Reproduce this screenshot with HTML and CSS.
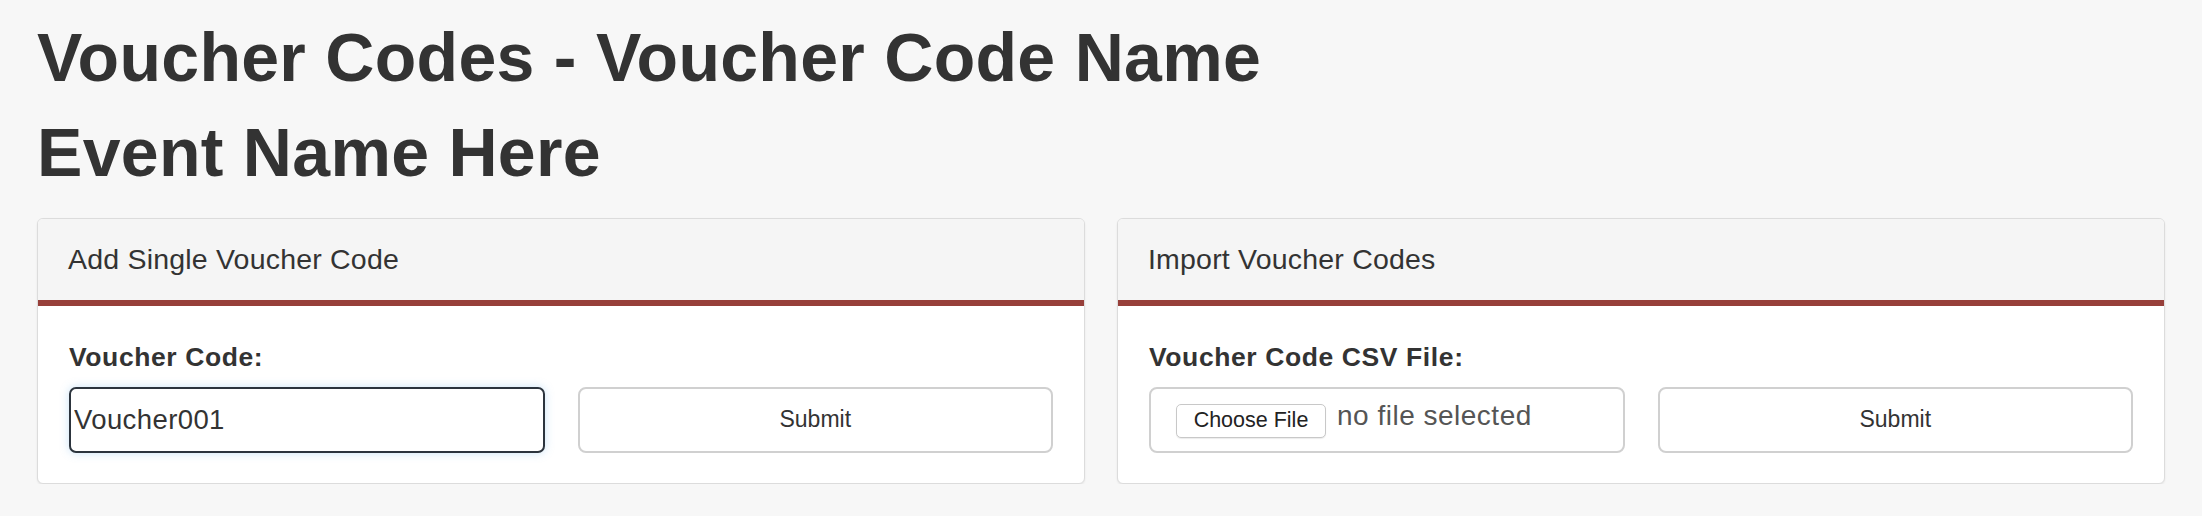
FILE: index.html
```html
<!DOCTYPE html>
<html lang="en">
<head>
<meta charset="utf-8">
<title>Voucher Codes</title>
<link rel="stylesheet" href="styles.css">
</head>
<body>
<div class="page">
  <h1 class="title">Voucher Codes - Voucher Code Name</h1>
  <h1 class="title second">Event Name Here</h1>
  <div class="panels">
    <div class="panel">
      <div class="panel-heading">Add Single Voucher Code</div>
      <div class="panel-body">
        <label class="field-label" for="code">Voucher Code:</label>
        <div class="form-row">
          <input id="code" class="text-input" type="text" value="Voucher001">
          <button class="submit-btn" type="button">Submit</button>
        </div>
      </div>
    </div>
    <div class="panel">
      <div class="panel-heading">Import Voucher Codes</div>
      <div class="panel-body">
        <label class="field-label">Voucher Code CSV File:</label>
        <div class="form-row">
          <div class="file-box">
            <button class="choose-btn" type="button">Choose File</button>
            <span class="file-status">no file selected</span>
          </div>
          <button class="submit-btn" type="button">Submit</button>
        </div>
      </div>
    </div>
  </div>
</div>
</body>
</html>
```

FILE: styles.css
```css
html, body {
  margin: 0;
  padding: 0;
}

body {
  background: #f7f7f7;
  color: #333;
  font-family: "Liberation Sans", Arial, Helvetica, sans-serif;
}

.page {
  padding: 0 37px;
}

.title {
  font-size: 68px;
  font-weight: bold;
  line-height: 1.1;
  letter-spacing: 0.3px;
  margin: 20px 0 0;
  color: #333;
}

.panels {
  display: grid;
  grid-template-columns: 1fr 1fr;
  gap: 32px;
  margin-top: 28px;
}

.panel {
  background: #fff;
  border: 1px solid #dcdcdc;
  border-radius: 6px;
  box-shadow: 0 1px 2px rgba(0, 0, 0, 0.08);
  overflow: hidden;
}

.panel-heading {
  background: #f5f5f5;
  padding: 25px 30px;
  font-size: 28.5px;
  line-height: 31px;
  letter-spacing: 0.2px;
  color: #333;
  border-bottom: 6px solid #973f3a;
}

.panel-body {
  padding: 35px 31px 30px;
}

.field-label {
  display: block;
  font-size: 26.5px;
  font-weight: bold;
  line-height: 32px;
  letter-spacing: 0.6px;
  margin-bottom: 14px;
  color: #333;
}

.form-row {
  display: grid;
  grid-template-columns: 1fr 1fr;
  gap: 33px;
}

.text-input {
  box-sizing: border-box;
  height: 66px;
  width: 100%;
  margin: 0;
  padding: 0 3px;
  border: 2px solid #2c343d;
  border-radius: 7px;
  background: #fff;
  font-family: "Liberation Sans", Arial, sans-serif;
  font-size: 27.5px;
  letter-spacing: 0.4px;
  color: #333;
  box-shadow: 0 0 10px rgba(102, 175, 233, 0.35);
  outline: none;
}

.submit-btn {
  box-sizing: border-box;
  height: 66px;
  width: 100%;
  margin: 0;
  border: 2px solid #d0d0d0;
  border-radius: 8px;
  background: #fff;
  font-family: "Liberation Sans", Arial, sans-serif;
  font-size: 23px;
  color: #333;
}

.file-box {
  box-sizing: border-box;
  height: 66px;
  display: flex;
  align-items: center;
  padding-left: 25px;
  border: 2px solid #d0d0d0;
  border-radius: 8px;
  background: #fff;
}

.choose-btn {
  box-sizing: border-box;
  width: 150px;
  height: 34px;
  margin: 2px 0 0;
  padding: 0;
  border: 1px solid #c8c8c8;
  border-radius: 5px;
  background: #fff;
  box-shadow: 0 1px 1px rgba(0, 0, 0, 0.08);
  font-family: "Liberation Sans", Arial, sans-serif;
  font-size: 21.5px;
  color: #222;
}

.file-status {
  margin-left: 11px;
  margin-bottom: 8px;
  font-size: 28px;
  letter-spacing: 0.5px;
  color: #555;
}
```
